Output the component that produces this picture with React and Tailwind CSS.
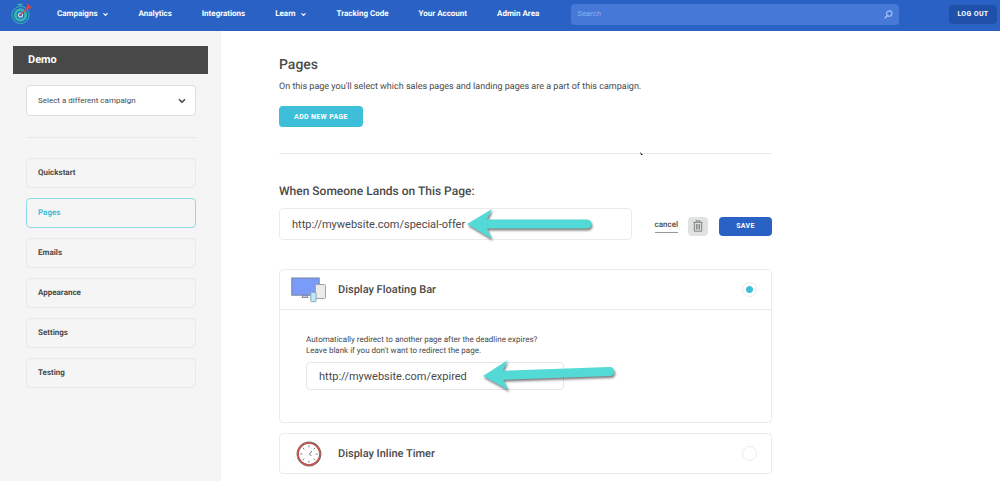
import { useState } from "react";
import { ChevronDown } from "lucide-react";

const NAV_LINKS = [
  { label: "Campaigns", menu: true },
  { label: "Analytics" },
  { label: "Integrations" },
  { label: "Learn", menu: true },
  { label: "Tracking Code" },
  { label: "Your Account" },
  { label: "Admin Area" },
];

const STEPS = ["Quickstart", "Pages", "Emails", "Appearance", "Settings", "Testing"];

function Logo() {
  return (
    <svg viewBox="0 0 22 22" className="w-[22px] h-[22px]" fill="none" aria-hidden="true">
      <path d="M6.5 1.5h5M9 1.5v2" stroke="#35b5b0" strokeWidth="1.4" />
      <circle cx="9.5" cy="12" r="8.6" stroke="#35b5b0" strokeWidth="1" />
      <circle cx="9.5" cy="12" r="5.2" stroke="#35b5b0" strokeWidth="3" />
      <circle cx="9.5" cy="12" r="2" stroke="#dce8fa" strokeWidth="1.1" />
      <path d="M9.5 12l8-8" stroke="#d8433f" strokeWidth="1.1" />
      <path d="M15.6 5.8V3L18 .8l.5 2.4 2.6.6-2.3 2.3z" fill="#d8433f" />
    </svg>
  );
}

function DevicesIcon() {
  return (
    <svg viewBox="0 0 36 26" className="w-9 h-[26px]" fill="none" aria-hidden="true">
      <path d="M11.5 18h5v2.5h-5zM10.5 20.5h7" fill="#c9d0da" stroke="#8a93a3" />
      <rect x="0.8" y="1" width="27.4" height="17.2" fill="#7a9bf8" stroke="#77839f" />
      <rect x="24.5" y="7.5" width="10" height="14" rx="1" fill="#ebebeb" stroke="#a2a2a2" />
      <rect x="19.8" y="15.3" width="5.2" height="9.4" rx="0.8" fill="#b9ecfa" stroke="#8ba3b0" />
    </svg>
  );
}

function ClockIcon() {
  const ticks = [0, 45, 90, 135, 180, 225, 270, 315];
  return (
    <svg viewBox="0 0 26 26" className="w-[26px] h-[26px]" fill="none" aria-hidden="true">
      <circle cx="13" cy="13" r="11.4" fill="#fff" stroke="#7d7070" strokeWidth="2" />
      <circle cx="13" cy="13" r="10.9" stroke="#d0504c" strokeWidth="1.4" />
      {ticks.map((deg) => (
        <path key={deg} d="M13 4.2v2.2" stroke="#777" strokeWidth="0.9" transform={`rotate(${deg} 13 13)`} />
      ))}
      <path d="M16 10l-2.6 3 2 2" stroke="#666" strokeWidth="0.9" />
    </svg>
  );
}

function TrashIcon() {
  return (
    <svg viewBox="0 0 10 12" className="w-[10px] h-3" fill="none" stroke="#777" strokeWidth="0.9" aria-hidden="true">
      <path d="M.5 2.3h9M3.2 2.2V.8h3.6v1.4M1.3 2.5v8.7h7.4V2.5M3.4 4v5.6M5 4v5.6M6.6 4v5.6" />
    </svg>
  );
}

function SearchIcon() {
  return (
    <svg viewBox="0 0 10 10" className="w-[9px] h-[9px]" fill="none" stroke="#a9c3f5" strokeWidth="1.2" aria-hidden="true">
      <circle cx="5.9" cy="4" r="3" />
      <path d="M3.8 6.2L.8 9.2" strokeWidth="1.6" />
    </svg>
  );
}

function Arrow({ shaft, tilt, className }) {
  return (
    <svg
      viewBox="0 0 140 40"
      className={`absolute w-[140px] h-10 pointer-events-none ${className}`}
      style={{ filter: "drop-shadow(1px 2px 1px rgba(0,0,0,0.5))" }}
      aria-hidden="true"
    >
      <path
        d={`M4 20L29 5l-5 10.5h${shaft}a4.5 4.5 0 0 1 0 9H24L29 35z`}
        fill="#53dad6"
        transform={`rotate(${tilt} 4 20)`}
      />
    </svg>
  );
}

function OptionHeader({ icon, label, value, selected, onSelect }) {
  return (
    <label className="flex items-center h-[39px] pl-[11px] pr-[14px] cursor-pointer">
      <span className="w-9 flex justify-center">{icon}</span>
      <span className="ml-[11px] flex-1 text-[11px] leading-4 font-medium">{label}</span>
      <input
        type="radio"
        name="display"
        value={value}
        checked={selected === value}
        onChange={() => onSelect(value)}
        className="appearance-none w-[15px] h-[15px] rounded-full border border-[#ebebeb] bg-white checked:bg-[radial-gradient(circle,#3dbfd9_3px,#fff_4px)]"
      />
    </label>
  );
}

export default function App() {
  const [step, setStep] = useState("Pages");
  const [display, setDisplay] = useState("floating");
  const [landingUrl, setLandingUrl] = useState("http://mywebsite.com/special-offer");
  const [redirectUrl, setRedirectUrl] = useState("http://mywebsite.com/expired");

  return (
    <div className="min-h-screen flex flex-col bg-white text-[#4a4a4a] font-['Roboto',sans-serif] [text-rendering:geometricPrecision]">
      {/* Top bar */}
      <header className="flex items-center h-[31px] pl-[11px] pr-[3px] pb-[3px] bg-[#2961c4] text-white">
        <a href="#" aria-label="Home">
          <Logo />
        </a>
        <nav className="flex gap-[30px] ml-6 mr-8 text-[8px] leading-3 font-bold whitespace-nowrap">
          {NAV_LINKS.map((link) => (
            <a key={link.label} href="#" className="flex items-center gap-1">
              {link.label}
              {link.menu && <ChevronDown className="w-[7px] h-[7px]" strokeWidth={4} />}
            </a>
          ))}
        </nav>
        <div className="flex-1 flex items-center h-[21px] px-[6px] rounded bg-[#4678d8]">
          <input
            type="search"
            aria-label="Search"
            placeholder="Search"
            className="flex-1 min-w-0 bg-transparent text-[8px] leading-3 italic outline-none placeholder:text-[#8fb0ee]"
          />
          <SearchIcon />
        </div>
        <button className="w-12 h-[19px] ml-[50px] rounded bg-[#1f51aa] text-[7px] leading-3 font-bold tracking-wider">
          LOG OUT
        </button>
      </header>

      <div className="flex flex-1">
        {/* Sidebar */}
        <aside className="w-[221px] shrink-0 pt-[15px] px-[13px] bg-[#f5f5f5]">
          <h2 className="h-7 px-[15px] flex items-center bg-[#484848] text-white text-[11px] leading-4 font-bold">
            Demo
          </h2>
          <div className="pl-[13px] pr-3">
            <div className="relative mt-[11px]">
              <select
                aria-label="Campaign"
                className="appearance-none w-full h-[31px] px-[11px] rounded border border-[#dedede] bg-white text-[8px]"
              >
                <option>Select a different campaign</option>
              </select>
              <ChevronDown className="absolute right-[9px] top-[11px] w-[10px] h-[10px] pointer-events-none" strokeWidth={4} />
            </div>
            <hr className="mt-[21px] mb-5 border-[#e8e8e8]" />
            <nav className="flex flex-col gap-[10px]">
              {STEPS.map((name) => (
                <a
                  key={name}
                  href="#"
                  onClick={() => setStep(name)}
                  className={`flex items-center h-[30px] px-[11px] rounded-sm border text-[8px] font-bold ${
                    step === name ? "border-[#8edbe8] text-[#3dbfd9]" : "border-[#e8e8e8]"
                  }`}
                >
                  {name}
                </a>
              ))}
            </nav>
          </div>
        </aside>

        {/* Content */}
        <main className="flex-1 pl-[58px] pr-4 pt-[26px] pb-2">
          <div className="max-w-[493px]">
            <h1 className="text-[14px] leading-4 font-medium">Pages</h1>
            <p className="mt-2 text-[9px] leading-3">
              On this page you'll select which sales pages and landing pages are a part of this campaign.
            </p>
            <button className="w-[84px] h-[21px] mt-[13px] rounded bg-[#3dbfd9] text-white text-[7px] leading-3 font-bold tracking-wider">
              ADD NEW PAGE
            </button>
            <div className="relative mt-[26px]">
              <hr className="border-[#ebebeb]" />
              <svg viewBox="0 0 3 3" className="absolute right-[129px] top-[-1px] w-[3px] h-[3px]" aria-hidden="true">
                <path d="M0 0l3 3H1z" fill="#222" />
              </svg>
            </div>

            <h2 className="mt-[29px] text-[12px] leading-4 font-medium">
              <label htmlFor="landing">When Someone Lands on This Page:</label>
            </h2>
            <div className="flex items-center mt-[9px]">
              <div className="relative flex-1">
                <input
                  id="landing"
                  type="text"
                  value={landingUrl}
                  onChange={(e) => setLandingUrl(e.target.value)}
                  className="w-full h-8 px-3 rounded border border-[#ebebeb] text-[11px] outline-none"
                />
                <Arrow shaft={100} tilt={0} className="left-[184px] top-[-4px]" />
              </div>
              <div className="flex items-center mt-1 ml-[23px]">
                <a href="#" className="pb-px border-b border-[#999] text-[8px] leading-3 font-medium">
                  cancel
                </a>
                <button aria-label="Delete" className="flex items-center justify-center w-5 h-[19px] ml-[10px] rounded bg-[#e0e2e2]">
                  <TrashIcon />
                </button>
                <button className="w-[53px] h-[19px] ml-[11px] rounded bg-[#2961c4] text-white text-[7px] leading-3 font-bold tracking-wider">
                  SAVE
                </button>
              </div>
            </div>

            <section className="mt-[29px] rounded border border-[#ebebeb]">
              <OptionHeader
                icon={<DevicesIcon />}
                label="Display Floating Bar"
                value="floating"
                selected={display}
                onSelect={setDisplay}
              />
              <div className="px-[26px] pt-6 pb-8 border-t border-[#ebebeb]">
                <label htmlFor="redirect" className="block text-[8px] leading-[11px]">
                  Automatically redirect to another page after the deadline expires?
                  <br />
                  Leave blank if you don't want to redirect the page.
                </label>
                <div className="relative mt-[6px]">
                  <input
                    id="redirect"
                    type="text"
                    value={redirectUrl}
                    onChange={(e) => setRedirectUrl(e.target.value)}
                    className="w-[258px] h-7 px-3 rounded border border-[#e6e6e6] text-[11px] outline-none"
                  />
                  <Arrow shaft={107} tilt={-2} className="left-[173px] top-[-6px]" />
                </div>
              </div>
            </section>

            <section className="mt-[10px] rounded border border-[#ebebeb]">
              <OptionHeader
                icon={<ClockIcon />}
                label="Display Inline Timer"
                value="inline"
                selected={display}
                onSelect={setDisplay}
              />
            </section>
          </div>
        </main>
      </div>
    </div>
  );
}
